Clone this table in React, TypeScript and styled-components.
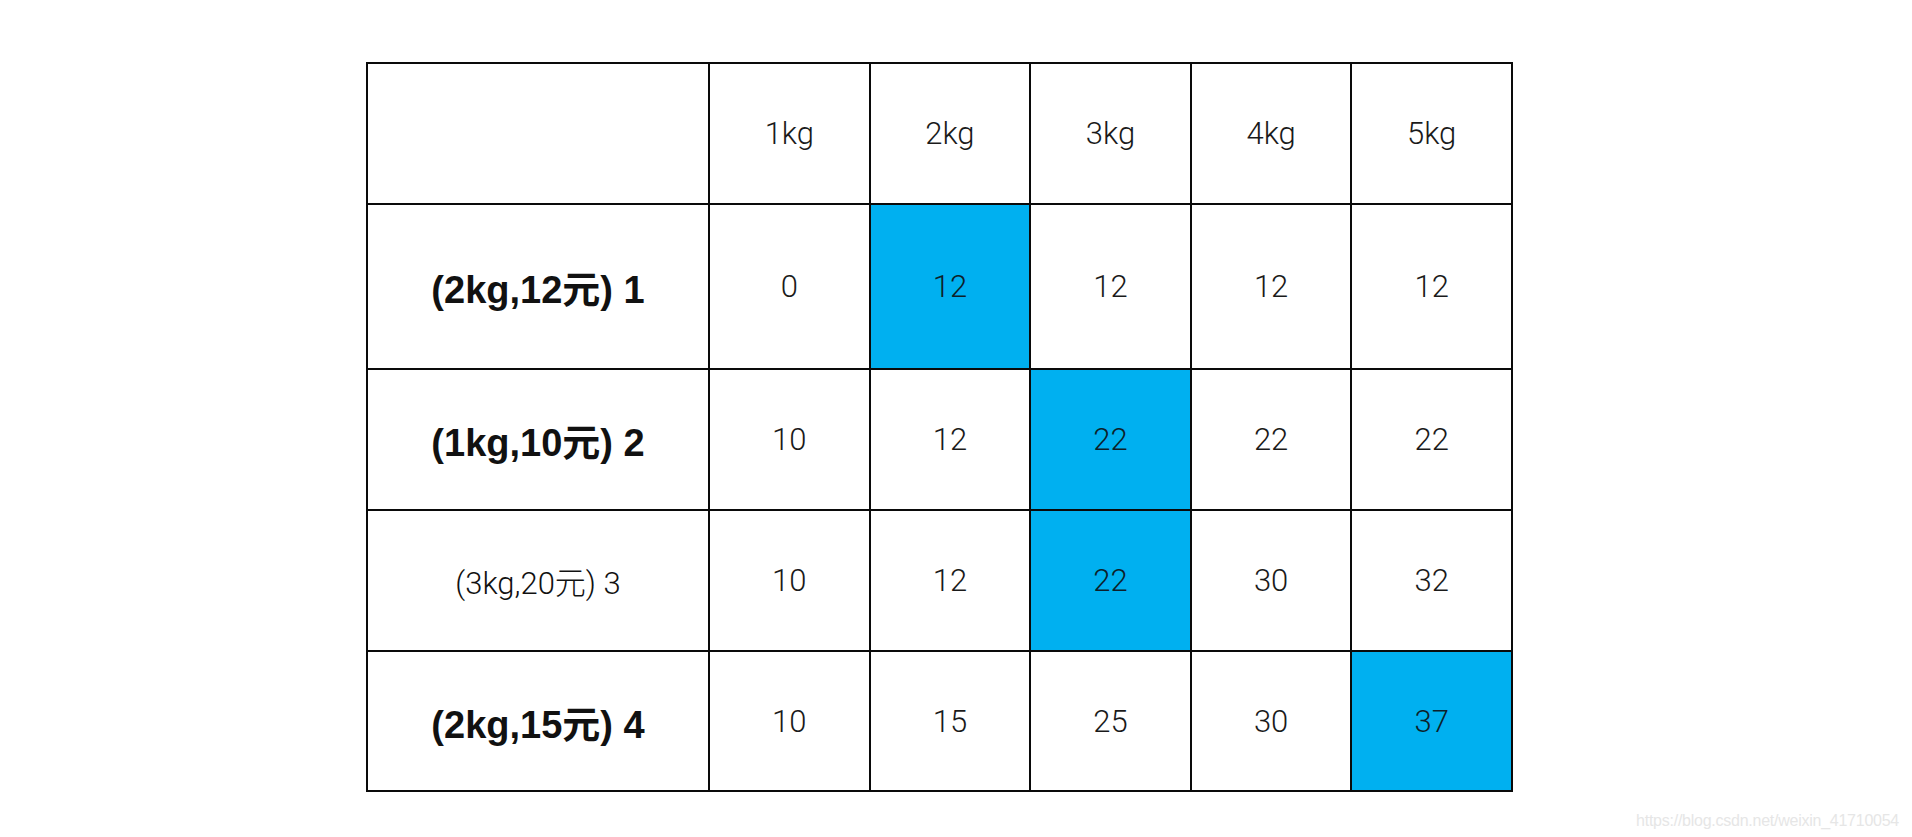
import React from 'react';
import styled, { createGlobalStyle } from 'styled-components';

const GlobalStyle = createGlobalStyle`
  html, body {
    margin: 0;
    padding: 0;
    background: #fff;
  }
`;

const Page = styled.div`
  width: 1912px;
  height: 837px;
  display: flex;
  flex-direction: column;
  padding: 62px 0 0 366px;
  box-sizing: border-box;
`;

const Grid = styled.div`
  width: 1147px;
  display: grid;
  grid-template-columns: 340px repeat(5, 1fr);
  grid-template-rows: 139px 163px 139px 139px 138px;
  gap: 2px;
  border: 2px solid #0a0a0a;
  background: #0a0a0a;
  box-sizing: border-box;
`;

const Cell = styled.div<{ $hit?: boolean }>`
  display: flex;
  align-items: center;
  justify-content: center;
  background: ${(p) => (p.$hit ? '#00b0f0' : '#fff')};
  color: ${(p) => (p.$hit ? '#0d1f2a' : '#1a1a1a')};
  font-family: Roboto, 'Noto Sans CJK SC', sans-serif;
  font-weight: 300;
  font-size: 31px;
`;

const Label = styled(Cell)<{ $bold?: boolean }>`
  font-family: ${(p) => (p.$bold ? "'Liberation Sans'" : 'Roboto')}, 'Noto Sans CJK SC', sans-serif;
  font-weight: ${(p) => (p.$bold ? 700 : 300)};
  font-size: ${(p) => (p.$bold ? '38px' : '31px')};
  color: #111;
`;

const Watermark = styled.div`
  align-self: flex-end;
  margin: 20px 13px 0 0;
  font-family: 'Liberation Sans', sans-serif;
  font-size: 16px;
  letter-spacing: -0.25px;
  color: #e6e6e6;
`;

const weights = ['1kg', '2kg', '3kg', '4kg', '5kg'];

const rows = [
  { label: '(2kg,12元) 1', bold: true, values: [0, 12, 12, 12, 12], hit: 1 },
  { label: '(1kg,10元) 2', bold: true, values: [10, 12, 22, 22, 22], hit: 2 },
  { label: '(3kg,20元) 3', bold: false, values: [10, 12, 22, 30, 32], hit: 2 },
  { label: '(2kg,15元) 4', bold: true, values: [10, 15, 25, 30, 37], hit: 4 },
];

const App = () => (
  <>
    <GlobalStyle />
    <Page>
      <Grid>
        <Cell />
        {weights.map((w) => (
          <Cell key={w}>{w}</Cell>
        ))}
        {rows.map((r) => (
          <React.Fragment key={r.label}>
            <Label $bold={r.bold}>{r.label}</Label>
            {r.values.map((v, i) => (
              <Cell key={i} $hit={i === r.hit}>
                {v}
              </Cell>
            ))}
          </React.Fragment>
        ))}
      </Grid>
      <Watermark>https://blog.csdn.net/weixin_41710054</Watermark>
    </Page>
  </>
);

export default App;
